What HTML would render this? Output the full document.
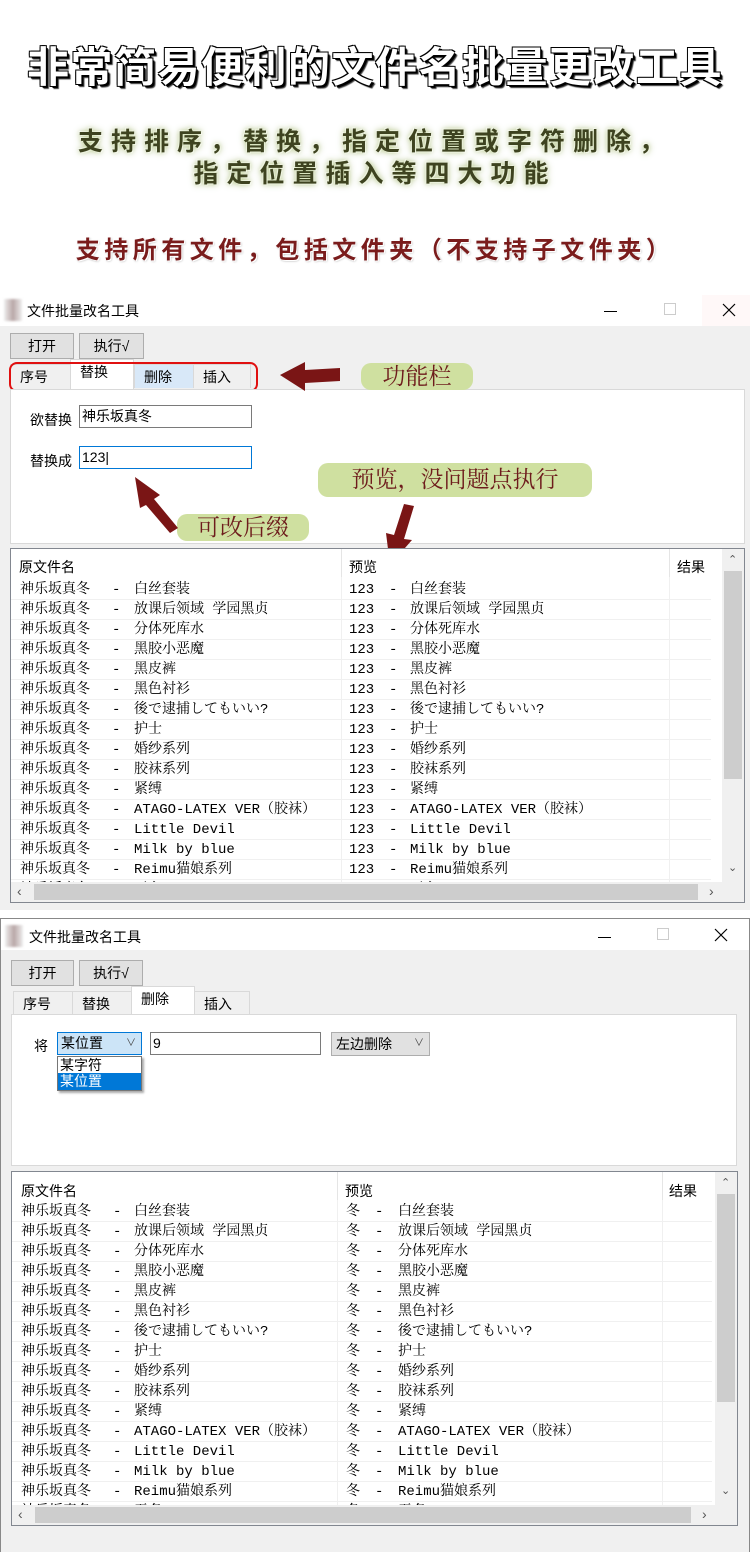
<!DOCTYPE html>
<html><head><meta charset="utf-8"><style>
*{margin:0;padding:0;box-sizing:border-box}
body{width:750px;height:1552px;position:relative;background:#fff;overflow:hidden;font-family:"Liberation Sans","Noto Sans CJK SC",sans-serif;font-size:14px;color:#000}
.a{position:absolute}
.t1{left:0;top:34px;width:750px;text-align:center;font-size:42px;font-weight:bold;color:#fff;letter-spacing:1.5px;white-space:nowrap;text-shadow:2px 2px 0 #000,-1px -1px 0 #000,1px -1px 0 #000,-1px 1px 0 #000,3px 3px 1px #333}
.t2{left:0;width:750px;text-align:center;font-size:25px;font-weight:bold;color:#3e4320;letter-spacing:8px;white-space:nowrap;text-shadow:0 0 4px #c8d8a0,1px 1px 0 #fff,-1px -1px 0 #fff,0 0 8px #aab880}
.t3{left:0;top:230px;width:750px;text-align:center;font-size:24px;font-weight:bold;color:#7a1c1c;letter-spacing:4.5px;white-space:nowrap;text-shadow:1px 1px 0 #fff,-1px -1px 0 #fff,1px 1px 2px #aaa}
.win{left:0;width:750px;background:#f0f0f0}
.tb{left:0;width:750px;height:31px;background:#fff}
.ttl{left:27px;top:6px;font-size:14px}
.ico{left:4px;top:4px;width:18px;height:22px;background:linear-gradient(90deg,#eee,#b9a7a7,#eee);filter:blur(1px)}
.btn{height:26px;background:#e1e1e1;border:1px solid #adadad;font-size:14px;line-height:24px;text-align:center}
.tab{height:24px;border:1px solid #d9d9d9;border-bottom:none;background:#f0f0f0;font-size:14px;line-height:24px;padding-left:9px}
.panel{background:#fff;border:1px solid #d9d9d9}
.inp{background:#fff;border:1px solid #7a7a7a;height:23px;font-size:14px;line-height:21px;padding-left:2px}
.list{background:#fff;border:1px solid #828790}
.hd{font-size:14px}
.r{position:absolute;left:0;height:20px;width:700px;font-family:"Liberation Mono","Noto Serif CJK SC",monospace;font-size:14px;line-height:20px;border-bottom:1px solid #f0f0f0}
.r span{position:absolute;top:0;white-space:nowrap}
.pill{background:#cfe0a0;border-radius:10px;color:#6e1c1c;font-family:"Liberation Serif","Noto Serif CJK SC",serif;font-size:23px;text-align:center;line-height:30px}
.vs{background:#f0f0f0}
.sbar{background:#cdcdcd}
</style></head><body>

<div class="a t1">非常简易便利的文件名批量更改工具</div>
<div class="a t2" style="top:122px">支持排序，替换，指定位置或字符删除，</div>
<div class="a t2" style="top:154px">指定位置插入等四大功能</div>
<div class="a t3">支持所有文件，包括文件夹（不支持子文件夹）</div>

<!-- Window 1 -->
<div class="a win" style="top:295px;height:615px">
 <div class="a tb" style="top:0"><div class="a ico"></div><div class="a ttl">文件批量改名工具</div>
  <div class="a" style="left:604px;top:16px;width:13px;height:1px;background:#000"></div>
  <div class="a" style="left:664px;top:8px;width:12px;height:12px;border:1px solid #ccc"></div>
  <div class="a" style="left:702px;top:0;width:48px;height:31px;background:#fff8f8"></div>
  <svg class="a" style="left:722px;top:8px" width="14" height="14"><path d="M1 1L13 13M13 1L1 13" stroke="#000" stroke-width="1.2"/></svg>
 </div>
 <div class="a btn" style="left:10px;top:38px;width:64px">打开</div>
 <div class="a btn" style="left:79px;top:38px;width:65px">执行√</div>
 <div class="a tab" style="left:10px;top:69px;width:61px">序号</div>
 <div class="a tab" style="left:70px;top:64px;width:64px;height:30px;background:#fff;line-height:24px">替换</div>
 <div class="a tab" style="left:134px;top:69px;width:60px;background:#d8e8f8">删除</div>
 <div class="a tab" style="left:193px;top:69px;width:58px">插入</div>
 <div class="a" style="left:9px;top:67px;width:249px;height:30px;border:2px solid #e01010;border-radius:8px"></div>
 <div class="a panel" style="left:10px;top:94px;width:735px;height:155px">
  <div class="a" style="left:19px;top:20px">欲替换</div>
  <div class="a inp" style="left:68px;top:15px;width:173px">神乐坂真冬</div>
  <div class="a" style="left:19px;top:61px">替换成</div>
  <div class="a inp" style="left:68px;top:56px;width:173px;border-color:#0078d7">123|</div>
 </div>
 <div class="a pill" style="left:361px;top:68px;width:112px;height:27px;line-height:27px">功能栏</div>
 <div class="a pill" style="left:318px;top:168px;width:274px;height:34px;line-height:34px">预览，没问题点执行</div>
 <div class="a pill" style="left:177px;top:219px;width:132px;height:27px;line-height:27px">可改后缀</div>
 <svg class="a" style="left:0;top:0" width="750" height="615">
  <polygon points="280,80 305,67 305,75 340,73 340,86 305,88 305,96" fill="#7a1515"/>
  <polygon points="135,182 160,200 154,204 178,233 170,238 146,210 140,213" fill="#7a1515"/>
  <polygon points="404,209 414,211 404,244 412,245 390,270 386,238 394,240" fill="#7a1515"/>
 </svg>
 <div class="a list" style="left:10px;top:253px;width:735px;height:355px;overflow:hidden">
  <div class="a hd" style="left:8px;top:8px">原文件名</div>
  <div class="a" style="left:330px;top:0;width:1px;height:28px;background:#e5e5e5"></div>
  <div class="a hd" style="left:338px;top:8px">预览</div>
  <div class="a" style="left:658px;top:0;width:1px;height:28px;background:#e5e5e5"></div>
  <div class="a hd" style="left:666px;top:8px">结果</div>
  <div class="a" style="left:330px;top:28px;width:1px;height:305px;background:#f0f0f0"></div>
  <div class="a" style="left:658px;top:28px;width:1px;height:305px;background:#f0f0f0"></div>
  <div class="a" style="left:0;top:31px;width:711px;height:302px;overflow:hidden">
   <div class="r" style="top:0"><span style="left:9px">神乐坂真冬</span><span style="left:101px">-</span><span style="left:123px">白丝套装</span><span style="left:338px">123</span><span style="left:378px">-</span><span style="left:399px">白丝套装</span></div>
   <div class="r" style="top:20px"><span style="left:9px">神乐坂真冬</span><span style="left:101px">-</span><span style="left:123px">放课后领域 学园黑贞</span><span style="left:338px">123</span><span style="left:378px">-</span><span style="left:399px">放课后领域 学园黑贞</span></div>
   <div class="r" style="top:40px"><span style="left:9px">神乐坂真冬</span><span style="left:101px">-</span><span style="left:123px">分体死库水</span><span style="left:338px">123</span><span style="left:378px">-</span><span style="left:399px">分体死库水</span></div>
   <div class="r" style="top:60px"><span style="left:9px">神乐坂真冬</span><span style="left:101px">-</span><span style="left:123px">黑胶小恶魔</span><span style="left:338px">123</span><span style="left:378px">-</span><span style="left:399px">黑胶小恶魔</span></div>
   <div class="r" style="top:80px"><span style="left:9px">神乐坂真冬</span><span style="left:101px">-</span><span style="left:123px">黑皮裤</span><span style="left:338px">123</span><span style="left:378px">-</span><span style="left:399px">黑皮裤</span></div>
   <div class="r" style="top:100px"><span style="left:9px">神乐坂真冬</span><span style="left:101px">-</span><span style="left:123px">黑色衬衫</span><span style="left:338px">123</span><span style="left:378px">-</span><span style="left:399px">黑色衬衫</span></div>
   <div class="r" style="top:120px"><span style="left:9px">神乐坂真冬</span><span style="left:101px">-</span><span style="left:123px">後で逮捕してもいい?</span><span style="left:338px">123</span><span style="left:378px">-</span><span style="left:399px">後で逮捕してもいい?</span></div>
   <div class="r" style="top:140px"><span style="left:9px">神乐坂真冬</span><span style="left:101px">-</span><span style="left:123px">护士</span><span style="left:338px">123</span><span style="left:378px">-</span><span style="left:399px">护士</span></div>
   <div class="r" style="top:160px"><span style="left:9px">神乐坂真冬</span><span style="left:101px">-</span><span style="left:123px">婚纱系列</span><span style="left:338px">123</span><span style="left:378px">-</span><span style="left:399px">婚纱系列</span></div>
   <div class="r" style="top:180px"><span style="left:9px">神乐坂真冬</span><span style="left:101px">-</span><span style="left:123px">胶袜系列</span><span style="left:338px">123</span><span style="left:378px">-</span><span style="left:399px">胶袜系列</span></div>
   <div class="r" style="top:200px"><span style="left:9px">神乐坂真冬</span><span style="left:101px">-</span><span style="left:123px">紧缚</span><span style="left:338px">123</span><span style="left:378px">-</span><span style="left:399px">紧缚</span></div>
   <div class="r" style="top:220px"><span style="left:9px">神乐坂真冬</span><span style="left:101px">-</span><span style="left:123px">ATAGO-LATEX VER（胶袜）</span><span style="left:338px">123</span><span style="left:378px">-</span><span style="left:399px">ATAGO-LATEX VER（胶袜）</span></div>
   <div class="r" style="top:240px"><span style="left:9px">神乐坂真冬</span><span style="left:101px">-</span><span style="left:123px">Little Devil</span><span style="left:338px">123</span><span style="left:378px">-</span><span style="left:399px">Little Devil</span></div>
   <div class="r" style="top:260px"><span style="left:9px">神乐坂真冬</span><span style="left:101px">-</span><span style="left:123px">Milk by blue</span><span style="left:338px">123</span><span style="left:378px">-</span><span style="left:399px">Milk by blue</span></div>
   <div class="r" style="top:280px"><span style="left:9px">神乐坂真冬</span><span style="left:101px">-</span><span style="left:123px">Reimu猫娘系列</span><span style="left:338px">123</span><span style="left:378px">-</span><span style="left:399px">Reimu猫娘系列</span></div>
   <div class="r" style="top:300px"><span style="left:9px">神乐坂真冬</span><span style="left:101px">-</span><span style="left:123px">无名</span><span style="left:338px">123</span><span style="left:378px">-</span><span style="left:399px">无名</span></div>
  </div>
  <div class="a vs" style="left:711px;top:0;width:22px;height:333px"><div class="a" style="left:6px;top:4px;font-size:11px;color:#555">⌃</div><div class="a sbar" style="left:2px;top:22px;width:18px;height:208px"></div><div class="a" style="left:6px;top:312px;font-size:11px;color:#555">⌄</div></div>
  <div class="a vs" style="left:0;top:333px;width:733px;height:20px"><div class="a" style="left:6px;top:1px;color:#555">‹</div><div class="a sbar" style="left:23px;top:2px;width:664px;height:16px"></div><div class="a" style="left:698px;top:1px;color:#555">›</div></div>
 </div>
</div>

<!-- Window 2 -->
<div class="a win" style="top:918px;height:634px;border:1px solid #888;border-bottom:none">
 <div class="a tb" style="top:0;left:0;width:748px"><div class="a ico" style="top:6px"></div><div class="a ttl" style="left:28px;top:8px">文件批量改名工具</div>
  <div class="a" style="left:597px;top:18px;width:13px;height:1px;background:#000"></div>
  <div class="a" style="left:656px;top:9px;width:12px;height:12px;border:1px solid #ccc"></div>
  <svg class="a" style="left:713px;top:9px" width="14" height="14"><path d="M1 1L13 13M13 1L1 13" stroke="#000" stroke-width="1.2"/></svg>
 </div>
 <div class="a btn" style="left:10px;top:41px;width:63px">打开</div>
 <div class="a btn" style="left:78px;top:41px;width:64px">执行√</div>
 <div class="a tab" style="left:12px;top:72px;width:60px">序号</div>
 <div class="a tab" style="left:71px;top:72px;width:60px">替换</div>
 <div class="a tab" style="left:130px;top:67px;width:64px;height:30px;background:#fff;line-height:24px">删除</div>
 <div class="a tab" style="left:193px;top:72px;width:56px">插入</div>
 <div class="a panel" style="left:10px;top:95px;width:726px;height:152px">
  <div class="a" style="left:22px;top:21px">将</div>
  <div class="a" style="left:45px;top:17px;width:85px;height:23px;background:#cce4f7;border:1px solid #0078d7;line-height:21px;padding-left:3px">某位置<span style="position:absolute;right:5px;font-size:10px;color:#444">∨</span></div>
  <div class="a" style="left:45px;top:41px;width:85px;height:35px;border:1px solid #767676;background:#fff;box-shadow:2px 2px 2px #aaa;line-height:16px">
   <div style="padding-left:2px">某字符</div><div style="background:#0078d7;color:#fff;padding-left:2px;height:17px">某位置</div></div>
  <div class="a inp" style="left:138px;top:17px;width:171px;height:23px">9</div>
  <div class="a" style="left:319px;top:17px;width:99px;height:24px;background:#e1e1e1;border:1px solid #adadad;line-height:22px;padding-left:4px">左边删除<span style="position:absolute;right:5px;font-size:10px;color:#444">∨</span></div>
 </div>
 <div class="a list" style="left:10px;top:252px;width:727px;height:355px;overflow:hidden">
  <div class="a hd" style="left:9px;top:9px">原文件名</div>
  <div class="a" style="left:325px;top:0;width:1px;height:28px;background:#e5e5e5"></div>
  <div class="a hd" style="left:333px;top:9px">预览</div>
  <div class="a" style="left:650px;top:0;width:1px;height:28px;background:#e5e5e5"></div>
  <div class="a hd" style="left:657px;top:9px">结果</div>
  <div class="a" style="left:325px;top:28px;width:1px;height:305px;background:#f0f0f0"></div>
  <div class="a" style="left:650px;top:28px;width:1px;height:305px;background:#f0f0f0"></div>
  <div class="a" style="left:0;top:30px;width:703px;height:303px;overflow:hidden">
   <div class="r" style="top:0"><span style="left:9px">神乐坂真冬</span><span style="left:101px">-</span><span style="left:122px">白丝套装</span><span style="left:334px">冬</span><span style="left:363px">-</span><span style="left:386px">白丝套装</span></div>
   <div class="r" style="top:20px"><span style="left:9px">神乐坂真冬</span><span style="left:101px">-</span><span style="left:122px">放课后领域 学园黑贞</span><span style="left:334px">冬</span><span style="left:363px">-</span><span style="left:386px">放课后领域 学园黑贞</span></div>
   <div class="r" style="top:40px"><span style="left:9px">神乐坂真冬</span><span style="left:101px">-</span><span style="left:122px">分体死库水</span><span style="left:334px">冬</span><span style="left:363px">-</span><span style="left:386px">分体死库水</span></div>
   <div class="r" style="top:60px"><span style="left:9px">神乐坂真冬</span><span style="left:101px">-</span><span style="left:122px">黑胶小恶魔</span><span style="left:334px">冬</span><span style="left:363px">-</span><span style="left:386px">黑胶小恶魔</span></div>
   <div class="r" style="top:80px"><span style="left:9px">神乐坂真冬</span><span style="left:101px">-</span><span style="left:122px">黑皮裤</span><span style="left:334px">冬</span><span style="left:363px">-</span><span style="left:386px">黑皮裤</span></div>
   <div class="r" style="top:100px"><span style="left:9px">神乐坂真冬</span><span style="left:101px">-</span><span style="left:122px">黑色衬衫</span><span style="left:334px">冬</span><span style="left:363px">-</span><span style="left:386px">黑色衬衫</span></div>
   <div class="r" style="top:120px"><span style="left:9px">神乐坂真冬</span><span style="left:101px">-</span><span style="left:122px">後で逮捕してもいい?</span><span style="left:334px">冬</span><span style="left:363px">-</span><span style="left:386px">後で逮捕してもいい?</span></div>
   <div class="r" style="top:140px"><span style="left:9px">神乐坂真冬</span><span style="left:101px">-</span><span style="left:122px">护士</span><span style="left:334px">冬</span><span style="left:363px">-</span><span style="left:386px">护士</span></div>
   <div class="r" style="top:160px"><span style="left:9px">神乐坂真冬</span><span style="left:101px">-</span><span style="left:122px">婚纱系列</span><span style="left:334px">冬</span><span style="left:363px">-</span><span style="left:386px">婚纱系列</span></div>
   <div class="r" style="top:180px"><span style="left:9px">神乐坂真冬</span><span style="left:101px">-</span><span style="left:122px">胶袜系列</span><span style="left:334px">冬</span><span style="left:363px">-</span><span style="left:386px">胶袜系列</span></div>
   <div class="r" style="top:200px"><span style="left:9px">神乐坂真冬</span><span style="left:101px">-</span><span style="left:122px">紧缚</span><span style="left:334px">冬</span><span style="left:363px">-</span><span style="left:386px">紧缚</span></div>
   <div class="r" style="top:220px"><span style="left:9px">神乐坂真冬</span><span style="left:101px">-</span><span style="left:122px">ATAGO-LATEX VER（胶袜）</span><span style="left:334px">冬</span><span style="left:363px">-</span><span style="left:386px">ATAGO-LATEX VER（胶袜）</span></div>
   <div class="r" style="top:240px"><span style="left:9px">神乐坂真冬</span><span style="left:101px">-</span><span style="left:122px">Little Devil</span><span style="left:334px">冬</span><span style="left:363px">-</span><span style="left:386px">Little Devil</span></div>
   <div class="r" style="top:260px"><span style="left:9px">神乐坂真冬</span><span style="left:101px">-</span><span style="left:122px">Milk by blue</span><span style="left:334px">冬</span><span style="left:363px">-</span><span style="left:386px">Milk by blue</span></div>
   <div class="r" style="top:280px"><span style="left:9px">神乐坂真冬</span><span style="left:101px">-</span><span style="left:122px">Reimu猫娘系列</span><span style="left:334px">冬</span><span style="left:363px">-</span><span style="left:386px">Reimu猫娘系列</span></div>
   <div class="r" style="top:300px"><span style="left:9px">神乐坂真冬</span><span style="left:101px">-</span><span style="left:122px">无名</span><span style="left:334px">冬</span><span style="left:363px">-</span><span style="left:386px">无名</span></div>
  </div>
  <div class="a vs" style="left:703px;top:0;width:22px;height:333px"><div class="a" style="left:6px;top:4px;font-size:11px;color:#555">⌃</div><div class="a sbar" style="left:2px;top:22px;width:18px;height:208px"></div><div class="a" style="left:6px;top:312px;font-size:11px;color:#555">⌄</div></div>
  <div class="a vs" style="left:0;top:333px;width:725px;height:20px"><div class="a" style="left:6px;top:1px;color:#555">‹</div><div class="a sbar" style="left:23px;top:2px;width:656px;height:16px"></div><div class="a" style="left:690px;top:1px;color:#555">›</div></div>
 </div>
</div>
</body></html>
